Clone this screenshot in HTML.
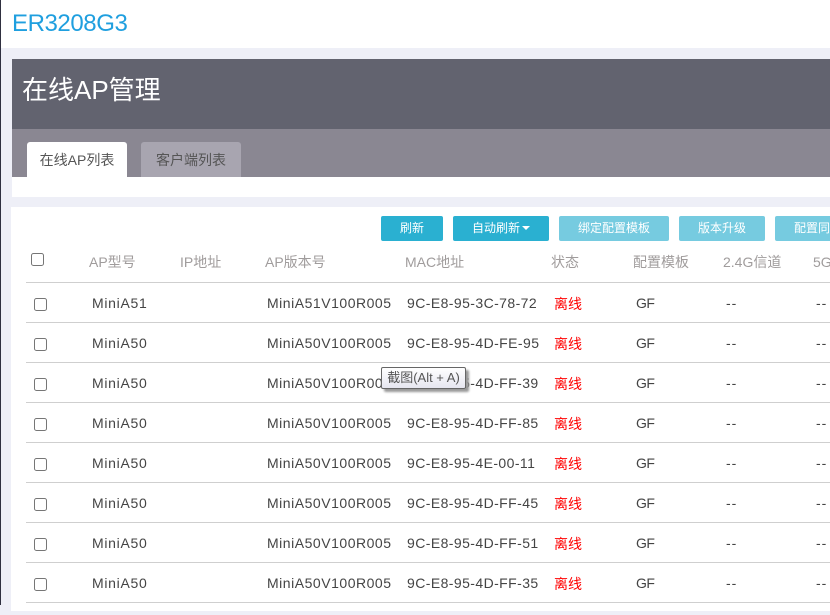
<!DOCTYPE html>
<html lang="zh"><head><meta charset="utf-8"><style>
html,body{margin:0;padding:0}
body{width:830px;height:615px;overflow:hidden;position:relative;background:#eeeff7;font-family:"Liberation Sans","Noto Sans CJK SC",sans-serif;font-size:14px;color:#444}
div,span{position:absolute;white-space:nowrap}
.line{left:26px;width:804px;height:1px;background:#cfcfcf}
.th{top:252px;line-height:20px;color:#a09c9c;font-size:14px}
.c{line-height:20px;color:#444;font-size:14px}
.r{color:#f00}
.btn{top:216px;height:25px;line-height:25px;text-align:center;color:#fff;font-size:12px;border-radius:2px;background:#2ab0d1}
.btn.d{background:#76cbe0}
.cb{left:34px;width:11px;height:11px;border:1px solid #767676;border-radius:2.5px;background:#fff}
.m{letter-spacing:.7px}
.v{letter-spacing:.52px}
.a{letter-spacing:.42px}
.g{letter-spacing:-.5px}
.s{letter-spacing:1px}
</style></head><body>
<div style="left:0;top:0;width:830px;height:48px;background:#fff"></div>
<div style="left:0;top:0;width:1px;height:605px;background:#2f3040"></div>
<div style="left:12px;top:7px;font-size:24px;line-height:33px;color:#1f9fdf;letter-spacing:-.42px">ER3208G3</div>
<div style="left:12px;top:59px;width:818px;height:70px;background:#62636f"></div>
<div style="left:22px;top:72px;font-size:26px;line-height:36px;color:#fff">在线AP管理</div>
<div style="left:12px;top:129px;width:818px;height:48px;background:#8a8792"></div>
<div style="left:12px;top:177px;width:818px;height:20px;background:#fff"></div>
<div style="left:27px;top:142px;width:100px;height:35px;background:#fff;border-radius:3px 3px 0 0;text-align:center;line-height:36px;color:#555">在线AP列表</div>
<div style="left:141px;top:142px;width:100px;height:35px;background:#a8a5b0;border-radius:3px 3px 0 0;text-align:center;line-height:36px;color:#555">客户端列表</div>
<div style="left:11px;top:207px;width:819px;height:404px;background:#fff"></div>
<div class="btn" style="left:381px;width:62px">刷新</div>
<div class="btn" style="left:453px;width:96px"><span style="position:static">自动刷新</span><span style="position:static;display:inline-block;width:0;height:0;border:4px solid transparent;border-top-color:#fff;border-bottom:0;margin-left:2px;vertical-align:2px"></span></div>
<div class="btn d" style="left:559px;width:110px">绑定配置模板</div>
<div class="btn d" style="left:679px;width:86px">版本升级</div>
<div class="btn d" style="left:775px;width:86px">配置同步</div>
<div class="cb" style="left:31px;top:253px;width:11px;height:11px"></div>
<div class="th" style="left:89px">AP型号</div>
<div class="th" style="left:180px">IP地址</div>
<div class="th" style="left:265px">AP版本号</div>
<div class="th" style="left:405px">MAC地址</div>
<div class="th" style="left:551px">状态</div>
<div class="th" style="left:633px">配置模板</div>
<div class="th" style="left:723px">2.4G信道</div>
<div class="th" style="left:813px">5G信道</div>

<div class="line" style="top:282px"></div>
<div class="cb" style="top:298px"></div><div class="c m" style="left:92px;top:293px">MiniA51</div><div class="c v" style="left:267px;top:293px">MiniA51V100R005</div><div class="c a" style="left:407px;top:293px">9C-E8-95-3C-78-72</div><div class="c r" style="left:554px;top:294px">离线</div><div class="c g" style="left:636px;top:293px">GF</div><div class="c s" style="left:726px;top:293px">--</div><div class="c s" style="left:816px;top:293px">--</div>

<div class="line" style="top:322px"></div>
<div class="cb" style="top:338px"></div><div class="c m" style="left:92px;top:333px">MiniA50</div><div class="c v" style="left:267px;top:333px">MiniA50V100R005</div><div class="c a" style="left:407px;top:333px">9C-E8-95-4D-FE-95</div><div class="c r" style="left:554px;top:334px">离线</div><div class="c g" style="left:636px;top:333px">GF</div><div class="c s" style="left:726px;top:333px">--</div><div class="c s" style="left:816px;top:333px">--</div>

<div class="line" style="top:362px"></div>
<div class="cb" style="top:378px"></div><div class="c m" style="left:92px;top:373px">MiniA50</div><div class="c v" style="left:267px;top:373px">MiniA50V100R005</div><div class="c a" style="left:407px;top:373px">9C-E8-95-4D-FF-39</div><div class="c r" style="left:554px;top:374px">离线</div><div class="c g" style="left:636px;top:373px">GF</div><div class="c s" style="left:726px;top:373px">--</div><div class="c s" style="left:816px;top:373px">--</div>

<div class="line" style="top:402px"></div>
<div class="cb" style="top:418px"></div><div class="c m" style="left:92px;top:413px">MiniA50</div><div class="c v" style="left:267px;top:413px">MiniA50V100R005</div><div class="c a" style="left:407px;top:413px">9C-E8-95-4D-FF-85</div><div class="c r" style="left:554px;top:414px">离线</div><div class="c g" style="left:636px;top:413px">GF</div><div class="c s" style="left:726px;top:413px">--</div><div class="c s" style="left:816px;top:413px">--</div>

<div class="line" style="top:442px"></div>
<div class="cb" style="top:458px"></div><div class="c m" style="left:92px;top:453px">MiniA50</div><div class="c v" style="left:267px;top:453px">MiniA50V100R005</div><div class="c a" style="left:407px;top:453px">9C-E8-95-4E-00-11</div><div class="c r" style="left:554px;top:454px">离线</div><div class="c g" style="left:636px;top:453px">GF</div><div class="c s" style="left:726px;top:453px">--</div><div class="c s" style="left:816px;top:453px">--</div>

<div class="line" style="top:482px"></div>
<div class="cb" style="top:498px"></div><div class="c m" style="left:92px;top:493px">MiniA50</div><div class="c v" style="left:267px;top:493px">MiniA50V100R005</div><div class="c a" style="left:407px;top:493px">9C-E8-95-4D-FF-45</div><div class="c r" style="left:554px;top:494px">离线</div><div class="c g" style="left:636px;top:493px">GF</div><div class="c s" style="left:726px;top:493px">--</div><div class="c s" style="left:816px;top:493px">--</div>

<div class="line" style="top:522px"></div>
<div class="cb" style="top:538px"></div><div class="c m" style="left:92px;top:533px">MiniA50</div><div class="c v" style="left:267px;top:533px">MiniA50V100R005</div><div class="c a" style="left:407px;top:533px">9C-E8-95-4D-FF-51</div><div class="c r" style="left:554px;top:534px">离线</div><div class="c g" style="left:636px;top:533px">GF</div><div class="c s" style="left:726px;top:533px">--</div><div class="c s" style="left:816px;top:533px">--</div>

<div class="line" style="top:562px"></div>
<div class="cb" style="top:578px"></div><div class="c m" style="left:92px;top:573px">MiniA50</div><div class="c v" style="left:267px;top:573px">MiniA50V100R005</div><div class="c a" style="left:407px;top:573px">9C-E8-95-4D-FF-35</div><div class="c r" style="left:554px;top:574px">离线</div><div class="c g" style="left:636px;top:573px">GF</div><div class="c s" style="left:726px;top:573px">--</div><div class="c s" style="left:816px;top:573px">--</div>

<div class="line" style="top:602px"></div>

<div style="left:381px;top:367px;width:83px;height:20px;border:1px solid #666;border-radius:2px;background:linear-gradient(#fff,#e6e6f0);box-shadow:3px 3px 2px #999;line-height:19px;font-size:13px;color:#555;text-align:center">截图(Alt + A)</div>
</body></html>
